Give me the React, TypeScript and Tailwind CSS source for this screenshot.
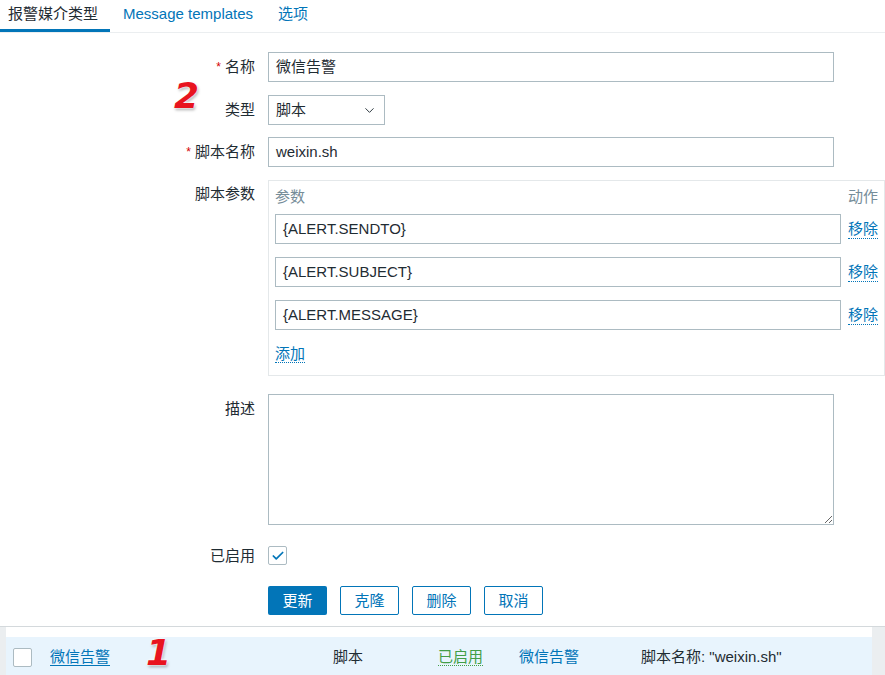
import { Check, ChevronDown } from 'lucide-react';

const font = { fontFamily: '"Liberation Sans", Arial, "Noto Sans CJK SC", sans-serif' };

function Label({ text, required, className = '' }: { text: string; required?: boolean; className?: string }) {
  return (
    <div className={`text-right text-[#1f2c33] ${className}`}>
      {required && <span className="text-[#d40000] text-[12px] mr-[4px] align-top">*</span>}
      {text}
    </div>
  );
}

function Marker({ n, className }: { n: string; className: string }) {
  return (
    <span
      className={`absolute italic font-black text-[#e8141f] text-[36px] leading-none [text-shadow:0_0_2px_#fff,0_0_3px_#fff,1px_2px_3px_rgba(0,0,0,0.35)] ${className}`}
      style={{ fontFamily: '"DejaVu Sans", sans-serif' }}
    >
      {n}
    </span>
  );
}

const params = ['{ALERT.SENDTO}', '{ALERT.SUBJECT}', '{ALERT.MESSAGE}'];

export default function App() {
  return (
    <div className="relative w-[885px] h-[675px] overflow-hidden bg-white text-[15px] leading-[20px] text-[#1f2c33]" style={font}>
      {/* Tabs */}
      <div className="flex h-[33px] border-b border-[#ebeef0]">
        <div className="pl-[8px] pr-[12px] pt-[4px] border-b-[3px] border-[#0275b8] text-[#1f2c33]">报警媒介类型</div>
        <div className="pl-[13px] pr-[12px] pt-[4px] text-[#0275b8]">Message templates</div>
        <div className="pl-[13px] pr-[12px] pt-[4px] text-[#0275b8]">选项</div>
      </div>

      {/* Form */}
      <div className="grid grid-cols-[255px_1fr] gap-x-[13px] mt-[19px]">
        <Label text="名称" required className="self-center" />
        <div className="h-[30px] w-[566px] border border-[#acbbc2] px-[7px] flex items-center">微信告警</div>

        <Label text="类型" className="self-center mt-[13px]" />
        <div className="mt-[13px] h-[30px] w-[117px] border border-[#acbbc2] px-[7px] flex items-center justify-between">
          <span>脚本</span>
          <ChevronDown className="w-[15px] h-[15px] text-[#1f2c33]" strokeWidth={1.5} />
        </div>

        <Label text="脚本名称" required className="self-center mt-[12px]" />
        <div className="mt-[12px] h-[30px] w-[566px] border border-[#acbbc2] px-[7px] flex items-center">weixin.sh</div>

        <Label text="脚本参数" className="mt-[13px] pt-[4px]" />
        <div className="mt-[13px] w-[617px] h-[196px] border border-[#e4e8ea] pl-[6px] pr-[6px] pt-[6px]">
          <div className="flex justify-between text-[#768d99] h-[20px]">
            <span>参数</span>
            <span>动作</span>
          </div>
          <div className="flex flex-col gap-[13px] mt-[7px]">
            {params.map((p) => (
              <div key={p} className="flex items-center gap-[7px]">
                <div className="h-[30px] flex-1 border border-[#acbbc2] px-[7px] flex items-center">{p}</div>
                <span className="shrink-0 whitespace-nowrap text-[#0275b8] border-b border-dotted border-[#0275b8] leading-[18px]">移除</span>
              </div>
            ))}
          </div>
          <div className="mt-[14px]">
            <span className="text-[#0275b8] border-b border-dotted border-[#0275b8] leading-[18px]">添加</span>
          </div>
        </div>

        <Label text="描述" className="mt-[18px] pt-[5px]" />
        <textarea
          readOnly
          className="mt-[18px] h-[131px] w-[566px] border border-[#acbbc2] outline-none block"
        />

        <Label text="已启用" className="self-center mt-[21px]" />
        <div className="mt-[21px] w-[19px] h-[19px] border border-[#acbbc2] rounded-[2px] flex items-center justify-center">
          <Check className="w-[14px] h-[14px] text-[#0275b8]" strokeWidth={3} />
        </div>

        <div />
        <div className="mt-[20px] flex gap-[13px]">
          <button className="w-[59px] h-[29px] rounded-[2px] bg-[#0275b8] text-white">更新</button>
          <button className="w-[59px] h-[29px] rounded-[2px] border border-[#0275b8] text-[#0275b8]">克隆</button>
          <button className="w-[59px] h-[29px] rounded-[2px] border border-[#0275b8] text-[#0275b8]">删除</button>
          <button className="w-[59px] h-[29px] rounded-[2px] border border-[#0275b8] text-[#0275b8]">取消</button>
        </div>
      </div>

      {/* Table row */}
      <div className="mt-[11px] flex border-t border-[#d4d9dc]">
        <div className="w-[6px] bg-[#ebeef0]" />
        <div className="flex-1">
          <div className="h-[10px] bg-white" />
          <div className="h-[40px] bg-[#e8f4fd] flex items-center">
            <div className="w-[44px] pl-[7px]">
              <div className="w-[19px] h-[19px] border border-[#acbbc2] rounded-[2px] bg-white" />
            </div>
            <div className="w-[283px]">
              <span className="text-[#0275b8] border-b border-[#0275b8] leading-[18px]">微信告警</span>
            </div>
            <div className="w-[105px]">脚本</div>
            <div className="w-[81px]">
              <span className="text-[#429e47] border-b border-dotted border-[#429e47] leading-[18px]">已启用</span>
            </div>
            <div className="w-[122px] text-[#0275b8]">微信告警</div>
            <div>脚本名称: "weixin.sh"</div>
          </div>
        </div>
        <div className="w-[13px] bg-[#ebeef0]" />
      </div>

      <Marker n="2" className="left-[174px] top-[78px]" />
      <Marker n="1" className="left-[146px] top-[635px]" />
    </div>
  );
}
